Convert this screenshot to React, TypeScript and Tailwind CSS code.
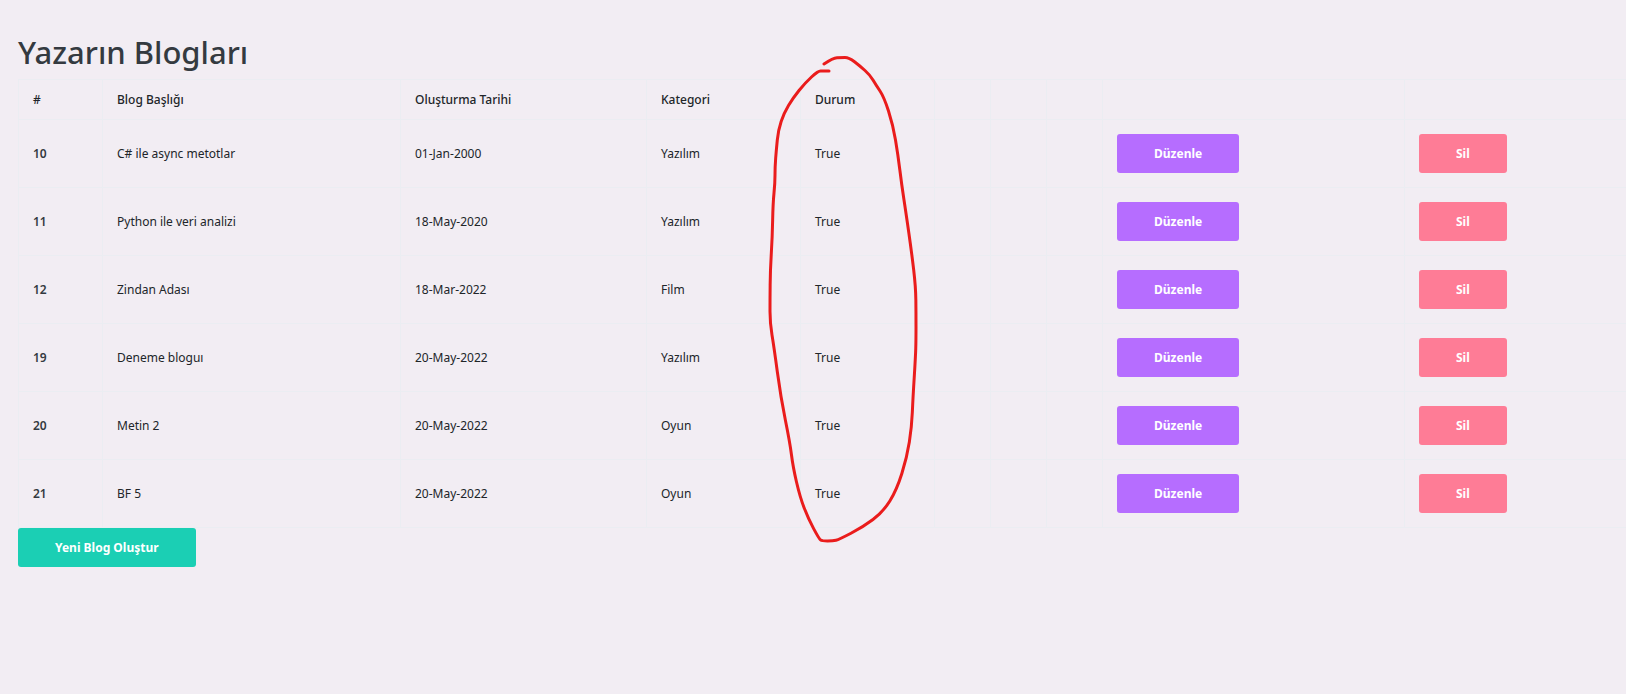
import React from 'react';

type Blog = { id: number; title: string; date: string; category: string; status: string };

const blogs: Blog[] = [
  { id: 10, title: 'C# ile async metotlar', date: '01-Jan-2000', category: 'Yazılım', status: 'True' },
  { id: 11, title: 'Python ile veri analizi', date: '18-May-2020', category: 'Yazılım', status: 'True' },
  { id: 12, title: 'Zindan Adası', date: '18-Mar-2022', category: 'Film', status: 'True' },
  { id: 19, title: 'Deneme bloguı', date: '20-May-2022', category: 'Yazılım', status: 'True' },
  { id: 20, title: 'Metin 2', date: '20-May-2022', category: 'Oyun', status: 'True' },
  { id: 21, title: 'BF 5', date: '20-May-2022', category: 'Oyun', status: 'True' },
];

const headers = ['#', 'Blog Başlığı', 'Oluşturma Tarihi', 'Kategori', 'Durum'];

const th = 'h-10 border border-[#ebedf2] px-3.5 text-left font-medium';
const td = 'border border-[#ebedf2] px-3.5 py-3.5';
const button =
  'inline-flex h-[39px] items-center rounded-[3px] px-[37px] align-middle text-xs font-bold text-white';

// Freehand loop around the "Durum" column, as sampled pen points.
const pen: [number, number][] = [
  [59, 11], [68, 5], [76, 4.5], [84, 4.5], [95, 13], [105, 22], [111, 32], [119, 44], [128, 72],
  [133, 102], [136.7, 132], [141, 160], [146.7, 200], [150.7, 234], [151, 260], [151, 287],
  [150.5, 304], [148, 344], [146.7, 374], [142, 404], [131.7, 437], [118, 459], [98, 474],
  [74, 486.5], [68, 488], [57, 488], [54, 485.7], [43, 465], [35, 444], [28, 414], [25, 390],
  [15.7, 344], [9, 294], [5, 270], [5, 247], [5.3, 217], [7.3, 184], [8, 150], [10, 130],
  [10, 114], [11.3, 97], [13.3, 77], [19, 60], [28, 45], [40, 30], [53, 18], [58, 18], [64, 18],
];

function smooth(points: [number, number][]) {
  let d = `M${points[0][0]} ${points[0][1]}`;
  for (let i = 1; i < points.length - 1; i++) {
    const [x, y] = points[i];
    const [nx, ny] = points[i + 1];
    d += `Q${x} ${y} ${(x + nx) / 2} ${(y + ny) / 2}`;
  }
  const last = points[points.length - 1];
  return `${d}L${last[0]} ${last[1]}`;
}

export default function App() {
  return (
    <main className="relative min-h-screen overflow-x-hidden bg-[#f2edf3] pt-[33px] pl-[18px] font-['Noto_Sans',sans-serif] text-xs text-[#212529]">
      <h1 className="mb-2 text-[31px] leading-[38px] font-medium text-[#343a40]">Yazarın Blogları</h1>
      <table className="w-full border-collapse">
        <colgroup>
          <col className="w-[84px]" />
          <col className="w-[298px]" />
          <col className="w-[246px]" />
          <col className="w-[154px]" />
          <col className="w-[134px]" />
          <col className="w-14" />
          <col className="w-14" />
          <col className="w-14" />
          <col className="w-[302px]" />
          <col />
        </colgroup>
        <thead>
          <tr>
            {headers.map((h) => (
              <th key={h} scope="col" className={th}>{h}</th>
            ))}
            <td className={th} />
            <td className={th} />
            <td className={th} />
            <td className={th} />
            <td className={`${th} border-r-0`} />
          </tr>
        </thead>
        <tbody>
          {blogs.map((b) => (
            <tr key={b.id}>
              <th scope="row" className={`${td} text-left font-semibold text-[#343a40]`}>{b.id}</th>
              <td className={td}>{b.title}</td>
              <td className={td}>{b.date}</td>
              <td className={td}>{b.category}</td>
              <td className={td}>{b.status}</td>
              <td className={td} />
              <td className={td} />
              <td className={td} />
              <td className={td}>
                <a href="#duzenle" className={`${button} bg-[#b66dff]`}>Düzenle</a>
              </td>
              <td className={`${td} border-r-0`}>
                <a href="#sil" className={`${button} bg-[#fe7c96]`}>Sil</a>
              </td>
            </tr>
          ))}
        </tbody>
      </table>
      <a href="#yeni" className={`${button} bg-[#1bcfb4]`}>Yeni Blog Oluştur</a>
      <svg
        aria-hidden="true"
        className="pointer-events-none absolute top-[53px] left-[765px]"
        width="160"
        height="500"
        viewBox="0 0 160 500"
        fill="none"
      >
        <path d={smooth(pen)} stroke="#ea1c1c" strokeWidth="3" strokeLinecap="round" strokeLinejoin="round" />
      </svg>
    </main>
  );
}
